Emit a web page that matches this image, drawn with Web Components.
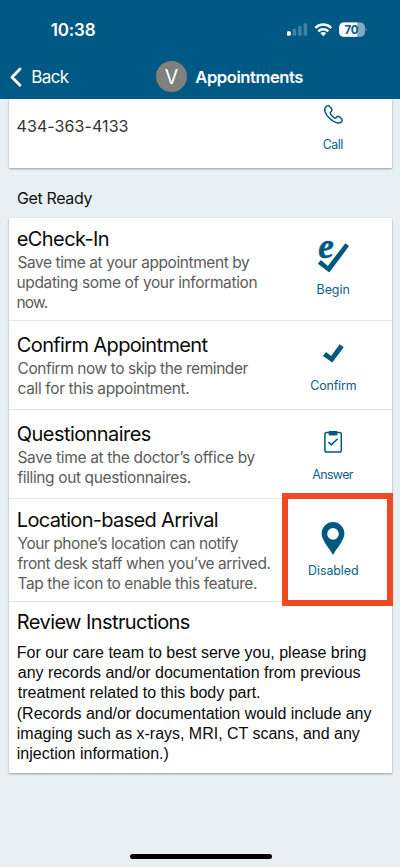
<!DOCTYPE html>
<html lang="en">
<head>
<meta charset="utf-8">
<meta name="viewport" content="width=device-width">
<title>Appointments</title>
<style>
html,body{margin:0;height:100%;overflow:hidden;background:#e9f0f4}
body{font-family:Inter,"Liberation Sans",sans-serif;color:#111}
</style>
</head>
<body>
<visit-app></visit-app>
<script>
const define = (name, html, ready) => customElements.define(name, class extends HTMLElement {
  connectedCallback() {
    if (this.shadowRoot) return;
    const t = document.createElement('template');
    t.innerHTML = html;
    this.attachShadow({mode: 'open'}).append(t.content.cloneNode(true));
    if (ready) ready(this, this.shadowRoot);
  }
});

/* One line of text, tracked so that its glyphs span exactly `w` pixels. */
const ctx = document.createElement('canvas').getContext('2d');
define('text-line', `<style>:host{display:block;white-space:nowrap}span{display:block}</style><span><slot></slot></span>`, (el, root) => {
  const cs = getComputedStyle(el), s = el.textContent, w = +el.getAttribute('w');
  ctx.font = `${cs.fontWeight} ${cs.fontSize} ${cs.fontFamily}`;
  const m = ctx.measureText(s), ls = (w - m.actualBoundingBoxRight - m.actualBoundingBoxLeft) / (s.length - 1);
  const span = root.querySelector('span');
  span.style.letterSpacing = ls + 'px';
  span.style.marginLeft = m.actualBoundingBoxLeft + 'px';
  span.style.width = w + 'px';
});

const icons = {
  call: `<path fill="none" stroke="#00587f" stroke-width="1.45" stroke-linejoin="round" d="M13.2 10.6C14.3 9.3 15.6 9.3 16.5 10.4L18.6 12.8C19.3 13.7 19.2 14.6 18.5 15.3L17.6 16.2C17 16.9 17.1 17.5 17.6 18.2C18.6 19.7 19.8 20.9 21.3 21.8C22 22.3 22.5 22.2 23.1 21.7L24 20.9C24.7 20.3 25.6 20.2 26.3 20.8L28.6 22.8C29.5 23.6 29.4 24.8 28.5 25.7C27 27.3 24.8 27.3 22.5 26.3C17.5 24 13.8 20.2 12 15.8C11.2 13.8 11.8 12 13.2 10.6Z"/>`,
  echeck: `<path d="M4.8 22.7L7.9 19L14.8 25L32.4 2.3L36 5.1L16.3 31.6Z"/><text x="5.2" y="17.3" font-family="Liberation Serif,serif" font-weight="700" font-style="italic" font-size="35" stroke="#00587f" stroke-width=".5">e</text>`,
  check: `<path d="M9.9 18.9L13.1 15.1L18.1 18.9L26.7 7.2L30.7 10.2L19.3 25.6Z"/>`,
  clipboard: `<rect x="11.9" y="6.5" width="16.4" height="19.6" rx="1.8" fill="none" stroke="#00587f" stroke-width="1.5"/><rect x="15.7" y="4.9" width="8.7" height="4.6" rx=".8"/><path d="M15.4 16.1L18.4 18.9L24.6 12.7" fill="none" stroke="#00587f" stroke-width="1.6"/>`,
  pin: `<path fill-rule="evenodd" d="M20 33C17 27 8.6 18.5 8.6 11.5A11.4 11.4 0 0 1 31.4 11.5C31.4 18.5 23 27 20 33ZM20 6.1A5.8 5.8 0 1 0 20 17.7A5.8 5.8 0 1 0 20 6.1Z"/>`
};
define('row-action', `<style>
:host{display:flex;flex-direction:column;align-items:center;color:#0b6088;font-size:12.4px;line-height:16px}
svg{display:block;width:40px;height:40px;margin-bottom:.8px;overflow:visible;fill:#00587f}
</style><svg viewBox="0 0 40 40"></svg><slot></slot>`, (el, root) => {
  root.querySelector('svg').innerHTML = icons[el.getAttribute('icon')];
});

define('app-card', `<style>
:host{display:block;margin:0 8px 0 9px;background:#fff;box-shadow:0 1px 2px rgba(0,0,0,.36)}
</style><slot></slot>`);

define('task-row', `<style>
:host{display:grid;grid-template-columns:265px 118px;box-sizing:border-box;border-bottom:1px solid #e2e4e5}
.t{padding-left:8.8px;font-size:20px;line-height:24px;color:#0a0a0a}
.d{font-size:15.5px;line-height:20.35px;color:#5c5c5c;margin:2.1px 0 0 -.3px}
</style><div class="t"><slot name="title"></slot><div class="d"><slot></slot></div></div><slot name="action"></slot>`, (el, root) => {
  el.style.height = el.getAttribute('h') + 'px';
  root.querySelector('.t').style.paddingTop = el.getAttribute('top') + 'px';
});

define('status-bar', `<style>
:host{display:flex;height:54px;color:#fff;font-weight:600;font-size:17px;line-height:20px}
text-line{margin:20px 0 0 50.7px;flex:1}
svg{width:84px;height:18px;margin:21px 31px 0 0}
</style><text-line w="45">10:38</text-line>
<svg viewBox="285 21 84 18" fill="#fff"><rect x="287" y="31.2" width="3.8" height="4.6" rx="1.1"/><g opacity=".25"><rect x="292.7" y="28.8" width="3.5" height="7" rx="1"/><rect x="298.2" y="26" width="3.5" height="9.8" rx="1"/><rect x="303.6" y="23.3" width="3.5" height="12.5" rx="1"/></g>
<g fill="none" stroke="#fff" stroke-width="2.5"><path d="M315.4 28A10.9 10.9 0 0 1 331.2 28"/><path d="M318.3 31.3A7 7 0 0 1 328.3 31.3"/></g><path d="M323.3 36.2L320.4 33.3A4 4 0 0 1 326.2 33.3Z"/>
<path d="M343.7 22.4H360.4A4.5 4.5 0 0 1 364.9 26.9V32.2A4.5 4.5 0 0 1 360.4 36.7H343.7A4.5 4.5 0 0 1 339.2 32.2V26.9A4.5 4.5 0 0 1 343.7 22.4Z" fill="#83acc2"/><path d="M343.7 22.4H357.2V36.7H343.7A4.5 4.5 0 0 1 339.2 32.2V26.9A4.5 4.5 0 0 1 343.7 22.4Z"/><path d="M365.8 27.6Q367.4 29.6 365.8 31.6Z" fill="#83acc2"/>
<text x="351.6" y="33.7" text-anchor="middle" font-family="Inter,sans-serif" font-size="11.5" font-weight="700" fill="#00598a" textLength="14">70</text></svg>`);

define('nav-bar', `<style>
:host{display:flex;height:45px;align-items:flex-start;color:#fff;font-size:17px;line-height:20px}
svg{width:14px;height:22px;margin:12px 0 0 9px;overflow:visible}
.b{margin:13px 0 0 9.3px;width:123.7px}
.v{width:31px;height:31px;margin-top:7.3px;border-radius:50%;background:#808080;display:flex;justify-content:center;font-size:19.5px;line-height:32px}
.a{font-weight:600;font-size:16.6px;margin:13px 0 0 8.3px}
</style><svg viewBox="0 0 14 22"><path d="M11 3L3 11.2L11 19.3" fill="none" stroke="#fff" stroke-width="2.8" stroke-linecap="round" stroke-linejoin="round"/></svg>
<text-line class="b" w="37.5">Back</text-line><div class="v">V</div><text-line class="a" w="108">Appointments</text-line>`);

define('visit-app', `<style>
:host{display:flex;flex-direction:column;width:400px;height:867px;position:relative;background:#e9f0f4}
header{background:#005984;height:99px;flex:none;position:relative;z-index:1}
.phone{height:69px;display:grid;grid-template-columns:265px 118px;font-size:16px;line-height:20px;color:#333}
.phone>text-line{margin:17.2px 0 0 7.6px}
.section{margin:20.2px 0 0 17px;font-size:16px;line-height:20px;height:29.8px}
.title{font-size:20px;line-height:24px;padding:7.9px 0 8.9px 8.8px;color:#0a0a0a}
.review{height:130.2px;padding-left:8.8px;font:16px/20.3px "Liberation Sans",Arial,sans-serif;color:#0a0a0a}
.mark{position:absolute;left:282px;top:493px;width:99px;height:101px;border:6px solid #f14824}
.home{position:absolute;left:129.5px;top:854px;width:142px;height:5px;border-radius:3px;background:#000}
</style>
<header><status-bar></status-bar><nav-bar></nav-bar></header>
<app-card><div class="phone"><text-line w="111">434-363-4133</text-line><row-action icon="call" style="margin-top:-2.7px"><text-line w="20.6">Call</text-line></row-action></div></app-card>
<div class="section"><text-line w="75.5">Get Ready</text-line></div>
<app-card>
<task-row h="103" top="8.7"><text-line slot="title" w="91">eCheck-In</text-line><text-line w="232.5">Save time at your appointment by</text-line><text-line w="239">updating some of your information</text-line><text-line w="30.3">now.</text-line><row-action slot="action" icon="echeck" style="margin-top:23.3px"><text-line w="31.8">Begin</text-line></row-action></task-row>
<task-row h="89" top="11.7"><text-line slot="title" w="190.7">Confirm Appointment</text-line><text-line w="231">Confirm now to skip the reminder</text-line><text-line w="171.7">call for this appointment.</text-line><row-action slot="action" icon="check" style="margin-top:16px"><text-line w="45.3">Confirm</text-line></row-action></task-row>
<task-row h="89" top="11.9"><text-line slot="title" w="133">Questionnaires</text-line><text-line w="238">Save time at the doctor’s office by</text-line><text-line w="173.3">filling out questionnaires.</text-line><row-action slot="action" icon="clipboard" style="margin-top:16.3px"><text-line w="41.7">Answer</text-line></row-action></task-row>
<task-row h="103" top="8.7"><text-line slot="title" w="200">Location-based Arrival</text-line><text-line w="221.3">Your phone’s location can notify</text-line><text-line w="253">front desk staff when you’ve arrived.</text-line><text-line w="239.5">Tap the icon to enable this feature.</text-line><row-action slot="action" icon="pin" style="margin-top:23px"><text-line w="48.9">Disabled</text-line></row-action></task-row>
<div class="title"><text-line w="172">Review Instructions</text-line></div>
<div class="review"><text-line w="347.7">For our care team to best serve you, please bring</text-line><text-line w="342.7">any records and/or documentation from previous</text-line><text-line w="241.3">treatment related to this body part.</text-line><text-line w="353.7">(Records and/or documentation would include any</text-line><text-line w="342.3">imaging such as x-rays, MRI, CT scans, and any</text-line><text-line w="150.7">injection information.)</text-line></div>
</app-card>
<div class="mark"></div><div class="home"></div>`);
</script>
</body>
</html>
